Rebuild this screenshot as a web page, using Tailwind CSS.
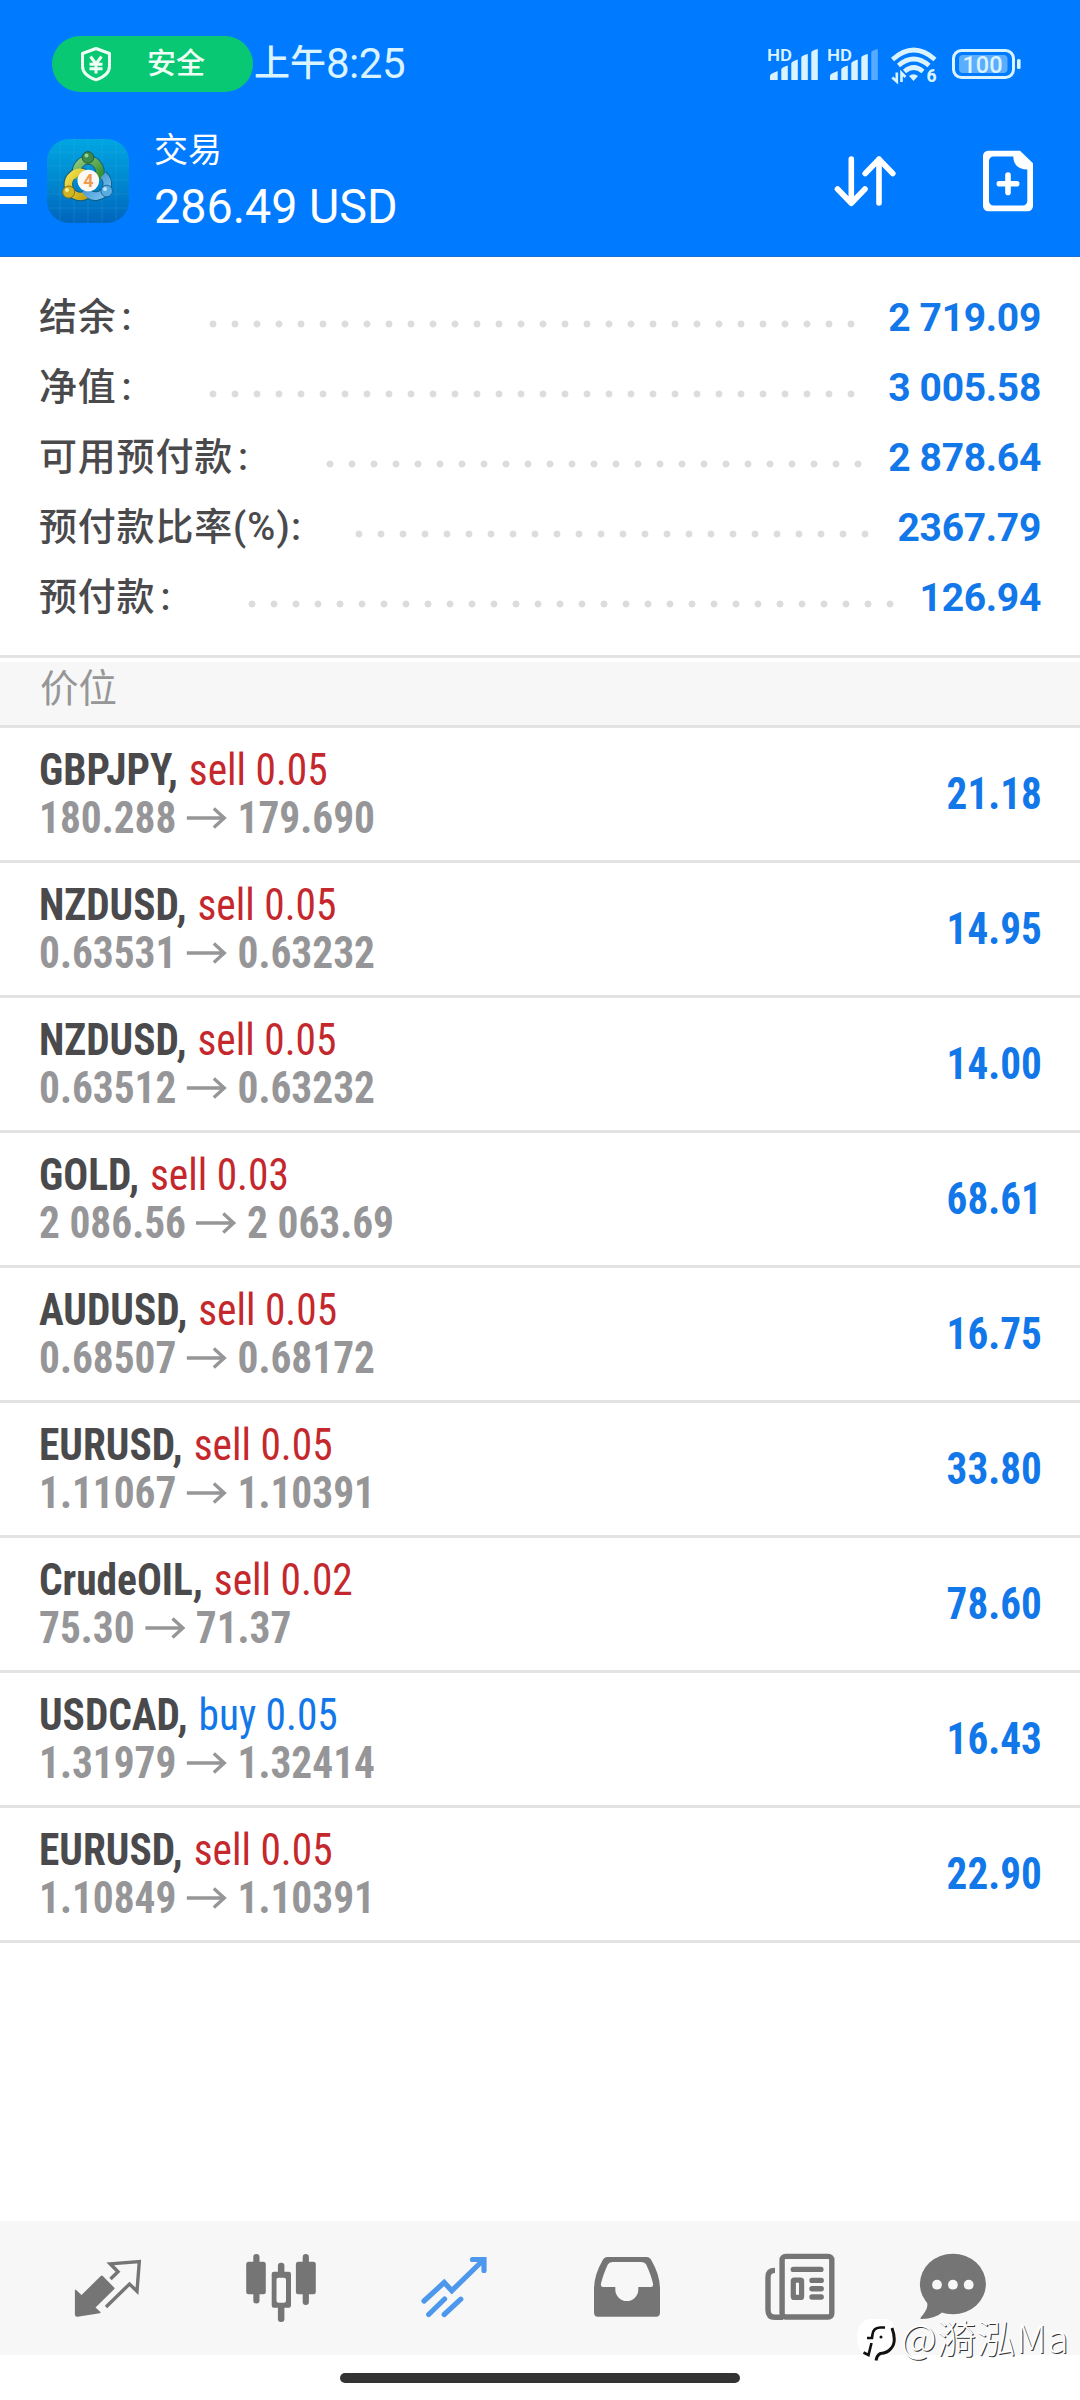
<!DOCTYPE html>
<html lang="zh-CN">
<head>
<meta charset="utf-8">
<title>交易</title>
<script src="https://cdn.jsdelivr.net/npm/@tailwindcss/browser@4"></script>
</head>
<body class="bg-white">
<div class="relative flex h-[2400px] w-[1080px] flex-col overflow-hidden bg-white font-[Roboto,'Noto_Sans_CJK_SC',sans-serif]">

  <header class="flex h-[257px] shrink-0 flex-col border-b border-[#1a6fd0] bg-[#007aff] pt-9 text-[#effaff]">
    <!-- status bar -->
    <div class="flex h-14 shrink-0 items-center pl-[52px] text-[#d9f3ff]">
      <div class="flex h-14 w-[201px] items-center rounded-full bg-[#09c873] pl-[27px] text-[#effff5]">
        <svg class="h-9 w-[34px]" viewBox="0 0 34 36" fill="none" stroke="currentColor" stroke-width="3">
          <path d="M17 2.5 30.5 7.5V20c0 6-5 11-13.5 13.8C8.500 31 3.500 26 3.500 20V7.500Z" stroke-linejoin="round"/>
          <path d="M11.500 10.500 17 18l5.500-7.500M17 18v9.500M10.500 18.300h13M10.500 22.800h13"/>
        </svg>
        <span class="ml-[34px] text-[29px] font-medium leading-none">安全</span>
      </div>
      <div class="ml-px flex w-[514px] items-center leading-[56px]"><span class="text-[36px] font-medium">上午</span><span class="text-[42px] font-[450] tracking-[-.5px]">8:25</span></div>
      <svg class="h-9 w-[52px]" viewBox="768 46 52 36" fill="currentColor">
        <text x="767" y="60.500" font-size="17" font-weight="600" textLength="25" lengthAdjust="spacingAndGlyphs">HD</text>
        <path d="M770 80v-4q0-2 3-3l4.700-2v9ZM781.300 80V69.500q0-2 6.500-4V80ZM791.300 80V63.500q0-2 6.500-4V80ZM801.300 80V57.500q0-2 6.500-3.500V80ZM811.300 80V52.500q0-2 6.500-3.500V80Z"/>
      </svg>
      <svg class="ml-2 h-9 w-[52px]" viewBox="768 46 52 36" fill="currentColor">
        <text x="767" y="60.500" font-size="17" font-weight="600" textLength="25" lengthAdjust="spacingAndGlyphs">HD</text>
        <path d="M770 80v-4q0-2 3-3l4.700-2v9ZM781.300 80V69.500q0-2 6.500-4V80ZM791.300 80V63.500q0-2 6.500-4V80ZM801.300 80V57.500q0-2 6.500-3.500V80Z"/>
        <path opacity=".4" d="M811.300 80V52.500q0-2 6.500-3.500V80Z"/>
      </svg>
      <svg class="ml-[10px] h-10 w-12 overflow-visible" viewBox="890 44 48 40" fill="none" stroke="currentColor" stroke-width="4.600">
        <path d="M892.500 59.500Q913.700 40.500 935 59.500M898.500 65.500Q913.700 52.500 929 65.500M904.500 71.500Q913.700 63.500 923 71.500"/>
        <path d="M909 76q4.500-3.500 9 0l-4.500 5Z" fill="currentColor" stroke="none"/>
        <path d="M896.800 72.500v9l-4.500-4M901.500 82v-9l4 4" stroke-width="2.600"/>
        <text x="926.500" y="82" font-size="17.500" font-weight="800" fill="currentColor" stroke="none">6</text>
      </svg>
      <svg class="ml-3.5 h-9 w-[70px]" viewBox="952 46 70 36" fill="none">
        <rect x="953.500" y="50.500" width="60" height="27" rx="8" stroke="currentColor" stroke-width="3"/>
        <rect x="959" y="55" width="48.500" height="18" rx="4" fill="currentColor" opacity=".42"/>
        <rect x="1017" y="59" width="3.600" height="10" rx="1.500" fill="currentColor"/>
        <text x="962.500" y="73" font-size="24" font-weight="500" textLength="40" lengthAdjust="spacingAndGlyphs" fill="currentColor">100</text>
      </svg>
    </div>

    <!-- app bar -->
    <div class="mt-[35px] flex items-start text-white">
      <div class="mt-[35px] flex w-[27px] flex-col gap-[9px]">
        <div class="h-2 bg-white"></div><div class="h-2 bg-white"></div><div class="h-2 bg-white"></div>
      </div>
      <svg class="ml-5 mt-3 h-[84px] w-[82px]" viewBox="0 0 82 84" fill="none">
        <defs>
          <linearGradient id="bg" x1="0" y1="0" x2="0" y2="1"><stop offset="0" stop-color="#00a6e2"/><stop offset=".5" stop-color="#0088cf"/><stop offset="1" stop-color="#0065bd"/></linearGradient>
          <linearGradient id="gr" x1="0" y1="0" x2="1" y2="1"><stop offset="0" stop-color="#8fc97a"/><stop offset="1" stop-color="#2f8a2b"/></linearGradient>
          <linearGradient id="ye" x1="0" y1="0" x2="1" y2="1"><stop offset="0" stop-color="#f3e04a"/><stop offset="1" stop-color="#c3a313"/></linearGradient>
          <linearGradient id="bl" x1="0" y1="0" x2="1" y2="1"><stop offset="0" stop-color="#2f86c8"/><stop offset="1" stop-color="#7cc4f0"/></linearGradient>
        </defs>
        <rect width="82" height="84" rx="22" fill="url(#bg)"/>
        <path d="M13 2v80M27 0v84M41 0v84M55 0v84M69 2v80M2 13h78M0 27h82M0 41h82M0 55h82M2 69h78" stroke="#4cc3f0" stroke-opacity=".18"/>
        <g stroke="#1d4a4a" stroke-opacity=".6" stroke-width="9.500">
          <path d="M29.500 40V33a11.700 12 0 0 1 23.400 0V40"/><path d="M37 34a12 12 0 1 0 2 22"/><path d="M56 36a12 12 0 0 1-6 21q-7 1-12-6"/>
        </g>
        <path d="M29.500 40V33a11.700 12 0 0 1 23.400 0V40" stroke="url(#gr)" stroke-width="7.500"/>
        <path d="M37 34a12 12 0 1 0 2 22" stroke="url(#ye)" stroke-width="7.500"/>
        <path d="M56 36a12 12 0 0 1-6 21q-7 1-12-6" stroke="url(#bl)" stroke-width="7.500"/>
        <circle cx="41" cy="18.500" r="5.800" fill="#3c8a4c" stroke="#1f5a35"/><circle cx="39.500" cy="16.500" r="2" fill="#9ad09a"/>
        <circle cx="21.700" cy="53" r="6" fill="#d0b423" stroke="#8a7714"/><circle cx="20" cy="51" r="2" fill="#f6ee9a"/>
        <circle cx="59.700" cy="52" r="5.800" fill="#58acdf" stroke="#1c64a0"/><circle cx="58" cy="50" r="2" fill="#bfe4fa"/>
        <circle cx="41.300" cy="41.500" r="10.800" fill="#fdf8f3"/>
        <text x="41.500" y="48" font-size="18" font-weight="700" text-anchor="middle" fill="#ee9a50">4</text>
      </svg>
      <div class="ml-[25px] flex w-[679px] flex-col">
        <div class="text-[34px] leading-[46px]">交易</div>
        <div class="mt-1.5 origin-left scale-x-[.972] text-[48px] leading-[56px]">286.49 USD</div>
      </div>
      <svg class="mt-[26px] h-14 w-16" viewBox="833 153 64 56" fill="none" stroke="white" stroke-width="5.600" stroke-linecap="round" stroke-linejoin="round">
        <path d="M851.300 159v44M837.500 189l13.800 14.200L865 189M879 203v-44M865.200 173.500 879 159.200l13.800 14.300"/>
      </svg>
      <svg class="ml-[83px] mt-5 h-[66px] w-14" viewBox="980 147 56 66">
        <path fill="white" fill-rule="evenodd" d="M988 150.700h32l13 12.500V206a5.300 5.300 0 0 1-5.300 5.300H988.300A5.300 5.300 0 0 1 983 206V156a5.300 5.300 0 0 1 5-5.300Zm5.500 5.800a4.500 4.500 0 0 0-4.500 4.500v40a4.500 4.500 0 0 0 4.500 4.500h29.300a4.500 4.500 0 0 0 4.500-4.500V169.500c-9 0-14-5-14-13Z"/>
        <path d="M1008 175v17.400M999.300 183.700h17.400" stroke="white" stroke-width="5.600" stroke-linecap="round"/>
      </svg>
    </div>
  </header>

  <!-- account summary -->
  <section class="flex h-[398px] shrink-0 flex-col px-[39px] pt-[25px] text-[38px] font-medium text-[#4a4a4d]" id="summary"></section>

  <div class="flex h-[73px] shrink-0 flex-col border-y-[3px] border-[#e3e3e3] pt-1">
    <div class="flex-1 bg-[#f7f7f7] pl-[40px] text-[38.5px] leading-[54px] text-[#969698]">价位</div>
  </div>

  <main id="rows" class="flex flex-col"></main>

  <nav class="mt-auto flex h-[134px] shrink-0 items-center bg-[#f7f7f7] pl-[21px] text-[#757575]">
    <div class="flex w-[173px] justify-center">
      <svg class="size-20" viewBox="0 0 80 80" fill="currentColor">
        <path d="M6.900 42.500q0-1.500 1.200-.500l5.400 5L32.800 28q1-1 2 0l11.300 11.500q1 1 0 1.800L27.500 59.500l4.700 4.300q1 1.200-.500 1.500L9.500 68.800q-2.600.200-2.600-2.300Z"/>
        <path d="M42.500 31 50 23.700 42.200 15.800 71.300 13.600 69 43.200 61.500 36 38 59" fill="none" stroke="currentColor" stroke-width="3.400"/>
      </svg>
    </div>
    <div class="flex w-[173px] justify-center">
      <svg class="size-20" viewBox="0 0 80 80" fill="currentColor">
        <rect x="12.300" y="6" width="6.200" height="49.500" rx="3"/><rect x="5.200" y="13.700" width="19.600" height="32.600" rx="2.500"/>
        <rect x="36.900" y="14.700" width="6.500" height="12" rx="3"/><rect x="36.900" y="56" width="6.500" height="18" rx="3"/>
        <path fill-rule="evenodd" d="M33 23.700h14.700a2.300 2.300 0 0 1 2.300 2.300v31.500a2.300 2.300 0 0 1-2.300 2.300H33a2.300 2.300 0 0 1-2.300-2.300V26a2.300 2.300 0 0 1 2.300-2.300Zm4.500 6a2 2 0 0 0-2 2v21a2 2 0 0 0 2 2h5.500a2 2 0 0 0 2-2v-21a2 2 0 0 0-2-2Z"/>
        <rect x="61.700" y="6" width="6.200" height="51" rx="3"/><rect x="54.900" y="13.700" width="19.900" height="32.600" rx="2.500"/>
      </svg>
    </div>
    <div class="flex w-[173px] justify-center text-[#4d98ec]">
      <svg class="size-20" viewBox="0 0 80 80" fill="none" stroke="currentColor" stroke-width="5.200" stroke-linecap="round">
        <path d="M10 53 30.200 34.500 37.800 42.700 69.300 12M58.500 11.500H70V22.500M14.700 66.500 30.600 51M30.200 66.500 46.800 51.200"/>
      </svg>
    </div>
    <div class="flex w-[173px] justify-center">
      <svg class="size-20" viewBox="0 0 80 80" fill="currentColor">
        <path fill-rule="evenodd" d="M20.500 9h39q3.500 0 5 3.500Q73 27 73 41v23.500q0 4.200-4 4.200H11q-4 0-4-4.200V41q0-14 8.500-28.500Q17 9 20.500 9Zm5 5q-3.500 0-4.700 2.500Q16 27 14 35.500q-.700 3.500 2 3.500h12.300v2.500a11.500 11.500 0 0 0 23 0V39H64q2.700 0 2-3.500Q64 27 59.200 16.500 58 14 54.500 14Z"/>
      </svg>
    </div>
    <div class="flex w-[173px] justify-center">
      <svg class="size-20" viewBox="0 0 80 80" fill="none" stroke="currentColor">
        <rect x="22.100" y="8.400" width="49.700" height="60.600" rx="3.500" stroke-width="5.400"/>
        <path d="M15 22.400q-7 0-7 6.500V62q0 7.300 7 7.300h8" stroke-width="5.400"/>
        <path d="M33.300 21.400h27.600M52 32.400h9.200M52 40.700h9.200M52 49h9.200" stroke-width="5.400" stroke-linecap="round"/>
        <rect x="33.300" y="32.200" width="8.300" height="17.200" rx="1" stroke-width="5.200"/>
      </svg>
    </div>
    <div class="flex w-[134px] justify-center">
      <svg class="size-20" viewBox="0 0 80 80" fill="currentColor">
        <ellipse cx="39.900" cy="36" rx="33" ry="30.300"/>
        <path d="M13 52q4.500 6.500-5.300 17.500-1 1.700 1 1.500Q22 71 31 63Z"/>
        <g fill="#f7f7f7"><circle cx="24" cy="36.700" r="4.900"/><circle cx="39.900" cy="36.700" r="4.900"/><circle cx="55.700" cy="36.700" r="4.900"/></g>
      </svg>
    </div>
  </nav>
  <div class="flex h-[45px] shrink-0 justify-center pt-[18px]"><div class="h-2.5 w-[400px] rounded-full bg-[#333]"></div></div>

  <!-- watermark -->
  <div class="absolute left-[856px] top-[2312px] flex items-start text-white">
    <svg class="mt-1.5 h-[46px] w-[42px]" viewBox="0 0 42 46" fill="none">
      <path d="M12 1h18q10 2 10 16 0 14-7 19L20 43l-8-4Q1 34 1 20 1 4 12 1Z" fill="#fff"/>
      <path d="M29 9.500h-5q-7 .500-7.500 7l-.500 3.500h-5M15.500 25l-3 12-5-2.500" stroke="#111" stroke-width="2.600"/>
      <path d="M36 10q5 14-1 20.500-3.500 4.500-10.500 5-3.500 1.500-4.500 7" stroke="#111" stroke-width="3"/>
      <circle cx="25" cy="19" r="1.500" fill="#111"/>
    </svg>
    <span class="ml-[3px] whitespace-nowrap font-['Noto_Sans_CJK_SC',sans-serif] text-[39px] font-light leading-[48px] tracking-[.5px] [text-shadow:1px_1px_0_#333]">@漪泓Ma</span>
  </div>
</div>

<script>
  const summary = [
    ['结余', ':', '2 719.09', 'w-[163px]', 'w-[660px]'],
    ['净值', ':', '3 005.58', 'w-[163px]', 'w-[660px]'],
    ['可用预付款', ':', '2 878.64', 'w-[280px]', 'w-[550px]'],
    ['预付款比率', '(%):', '2367.79', 'w-[309px]', 'w-[528px]'],
    ['预付款', ':', '126.94', 'w-[202px]', 'w-[660px]'],
  ];
  document.getElementById('summary').innerHTML = summary.map(([label, tail, value, lw, dw]) => `
    <div class="flex h-[70px] items-center whitespace-nowrap">
      <div class="${lw} shrink-0 leading-[70px] tracking-[.8px]">${label}<span class="${tail === ':' ? 'ml-[5px]' : 'tracking-[1.2px]'}">${tail}</span></div>
      <div class="${dw} mt-[14px] h-2 shrink-0 bg-[radial-gradient(circle_at_center,#dcdcdc_3px,transparent_3.9px)] bg-[length:22px_8px]"></div>
      <div class="ml-auto pt-[2px] text-[39px] font-bold leading-[70px] tracking-[-.3px] text-[#1277e8]">${value}</div>
    </div>`).join('');

  const positions = [
    ['GBPJPY', 'sell 0.05', '180.288', '179.690', '21.18'],
    ['NZDUSD', 'sell 0.05', '0.63531', '0.63232', '14.95'],
    ['NZDUSD', 'sell 0.05', '0.63512', '0.63232', '14.00'],
    ['GOLD', 'sell 0.03', '2 086.56', '2 063.69', '68.61'],
    ['AUDUSD', 'sell 0.05', '0.68507', '0.68172', '16.75'],
    ['EURUSD', 'sell 0.05', '1.11067', '1.10391', '33.80'],
    ['CrudeOIL', 'sell 0.02', '75.30', '71.37', '78.60'],
    ['USDCAD', 'buy 0.05', '1.31979', '1.32414', '16.43'],
    ['EURUSD', 'sell 0.05', '1.10849', '1.10391', '22.90'],
  ];
  document.getElementById('rows').innerHTML = positions.map(([sym, side, open, now, profit]) => `
    <div class="flex h-[135px] items-center justify-between border-b-[3px] border-[#e3e3e3] pl-[39px] pr-[38px] text-[44px] leading-[48px] [font-stretch:75%]">
      <div class="origin-left scale-x-[.94] whitespace-nowrap">
        <div><span class="mr-[1.5px] font-bold text-[#4a4a4d]">${sym},</span> <span class="font-[450] ${side.startsWith('buy') ? 'text-[#1277e8]' : 'text-[#c4282d]'}">${side}</span></div>
        <div class="flex items-center font-bold text-[#969698]">${open}
          <svg class="mx-[11px] mb-[1px] h-6 w-[43px]" viewBox="0 0 43 24" fill="none" stroke="currentColor" stroke-width="3.600"><path d="M0 12h40M29 2.500 40 12 29 21.500"/></svg>${now}</div>
      </div>
      <div class="origin-right scale-x-[.935] font-bold text-[#1277e8]">${profit}</div>
    </div>`).join('');
</script>
</body>
</html>
